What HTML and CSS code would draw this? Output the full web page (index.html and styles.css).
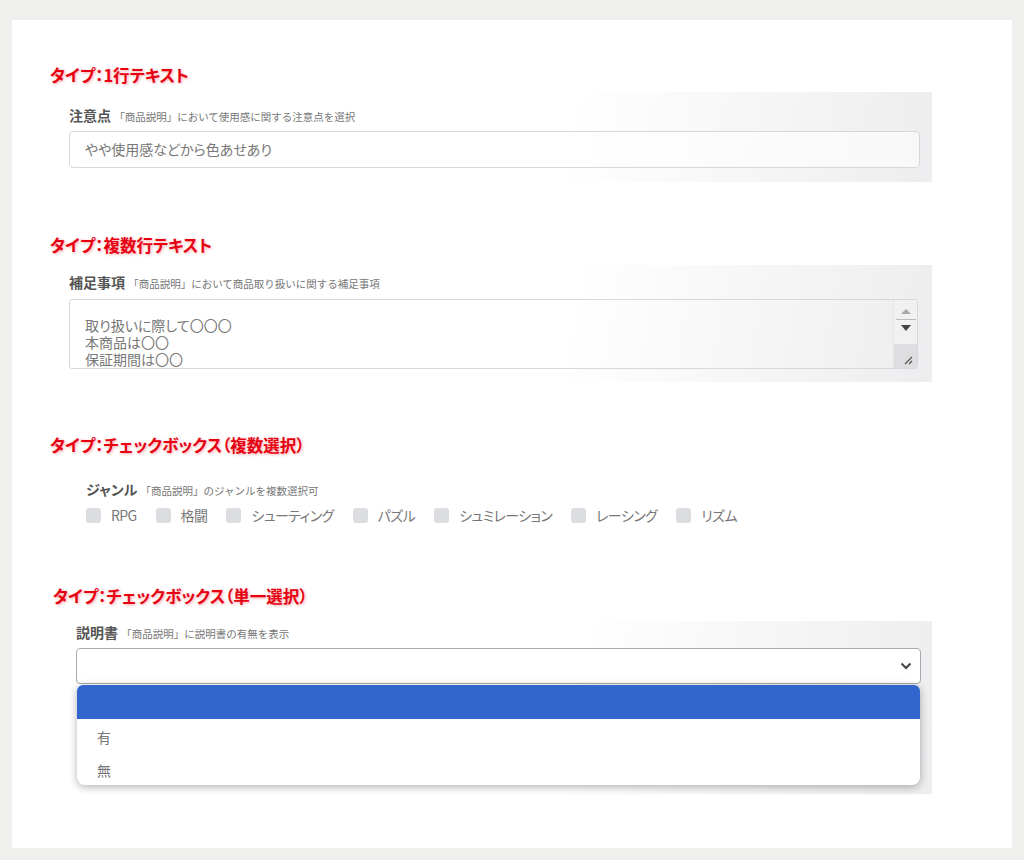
FILE: index.html
```html
<!DOCTYPE html>
<html lang="ja">
<head>
  <meta charset="UTF-8">
  <title>商品説明 入力タイプ</title>
  <link rel="stylesheet" href="styles.css">
</head>
<body>
  <div class="card">

    <!-- 1行テキスト -->
    <h2 class="type-title">タイプ：1行テキスト</h2>
    <div class="shot shot-single">
      <p class="field-label">注意点 <small>「商品説明」において使用感に関する注意点を選択</small></p>
      <div class="text-input">やや使用感などから色あせあり</div>
    </div>

    <!-- 複数行テキスト -->
    <h2 class="type-title t2">タイプ：複数行テキスト</h2>
    <div class="shot shot-multi">
      <p class="field-label">補足事項 <small>「商品説明」において商品取り扱いに関する補足事項</small></p>
      <div class="text-area">
        <div class="text-area-body">
          取り扱いに際して〇〇〇<br>
          本商品は〇〇<br>
          保証期間は〇〇
        </div>
        <div class="scrollbar">
          <span class="arrow up"></span>
          <span class="sep"></span>
          <span class="arrow down"></span>
          <span class="grip">
            <svg width="10" height="10" viewBox="0 0 10 10"><path d="M2 9 L9 2 M6 9 L9 6" stroke="#555" stroke-width="1.2" fill="none"/></svg>
          </span>
        </div>
      </div>
    </div>

    <!-- チェックボックス（複数選択） -->
    <h2 class="type-title t3">タイプ：チェックボックス（複数選択）</h2>
    <div class="shot shot-check">
      <p class="field-label">ジャンル <small>「商品説明」のジャンルを複数選択可</small></p>
      <div class="check-row">
        <label class="check"><span class="box"></span>RPG</label>
        <label class="check"><span class="box"></span>格闘</label>
        <label class="check"><span class="box"></span>シューティング</label>
        <label class="check"><span class="box"></span>パズル</label>
        <label class="check"><span class="box"></span>シュミレーション</label>
        <label class="check"><span class="box"></span>レーシング</label>
        <label class="check"><span class="box"></span>リズム</label>
      </div>
    </div>

    <!-- チェックボックス（単一選択） -->
    <h2 class="type-title t4">タイプ：チェックボックス（単一選択）</h2>
    <div class="shot shot-select">
      <p class="field-label">説明書 <small>「商品説明」に説明書の有無を表示</small></p>
      <div class="select-wrap">
        <div class="select">
          <svg class="chevron" width="12" height="8" viewBox="0 0 12 8"><path d="M1.5 1.5 L6 6 L10.5 1.5" stroke="#444" stroke-width="2" fill="none"/></svg>
        </div>
        <ul class="dropdown">
          <li class="active"></li>
          <li>有</li>
          <li>無</li>
        </ul>
      </div>
    </div>

  </div>
</body>
</html>
```

FILE: styles.css
```css
* {
  margin: 0;
  padding: 0;
  box-sizing: border-box;
}

body {
  background-color: #efefee;
  font-family: "Noto Sans CJK JP", "Noto Sans", sans-serif;
  font-feature-settings: "palt" 1;
}

.card {
  margin: 20px 12px 0;
  height: 828px;
  background-color: #fff;
  padding: 45px 0 0 38px;
}

/* Red section titles */
.type-title {
  font-size: 16.5px;
  line-height: 20px;
  font-weight: bold;
  color: #e60012;
  text-shadow: 1px 1px 3px rgba(220, 0, 0, 0.35);
}

.type-title.t2 { margin-top: 53px; }
.type-title.t3 { margin-top: 53px; }
.type-title.t4 { margin-top: 62px; margin-left: 3px; }

/* Screenshot panels */
.shot {
  width: 870px;
  margin-left: 12px;
  background: linear-gradient(100deg, #fff 58%, #ededef 100%);
}

.field-label {
  font-size: 14px;
  line-height: 18px;
  height: 18px;
  font-weight: bold;
  color: #555;
}

.field-label small {
  font-size: 10.5px;
  line-height: 1;
  font-weight: normal;
  color: #777;
  font-feature-settings: normal;
}

.shot-single {
  margin-top: 7px;
  padding: 14px 12px 14px 7px;
}

.text-input {
  margin-top: 7px;
  height: 37px;
  border: 1px solid #d8d8dc;
  border-radius: 4px;
  background: rgba(255, 255, 255, 0.6);
  padding-left: 15px;
  font-size: 14px;
  line-height: 35px;
  color: #777;
}

.shot-multi {
  margin-top: 10px;
  padding: 8px 14px 13px 7px;
}

.text-area {
  margin-top: 8px;
  height: 70px;
  border: 1px solid #d8d8dc;
  border-radius: 3px;
  display: flex;
  overflow: hidden;
}

.text-area-body {
  flex: 1;
  padding: 17px 0 0 15px;
  font-size: 14px;
  line-height: 17px;
  color: #777;
}

.scrollbar {
  width: 24px;
  display: flex;
  flex-direction: column;
  align-items: center;
  background-color: #f1f1f2;
  border-left: 1px solid #e6e6e8;
}

.arrow {
  width: 0;
  height: 0;
  border-left: 5px solid transparent;
  border-right: 5px solid transparent;
}

.arrow.up {
  margin-top: 9px;
  border-bottom: 5px solid #a8a8a8;
}

.arrow.down {
  margin-top: 5px;
  border-top: 6px solid #444;
}

.sep {
  margin-top: 5px;
  width: 20px;
  height: 1px;
  background: #bbb;
}

.grip {
  margin-top: auto;
  width: 100%;
  height: 24px;
  background-color: #dedee0;
  display: flex;
  align-items: flex-end;
  justify-content: flex-end;
  padding: 0 4px 3px 0;
}

/* Checkbox group */
.shot-check {
  background: none;
  margin-top: 25px;
  padding: 0 0 0 24px;
}

.check-row {
  display: flex;
  gap: 19px;
  margin-top: 8px;
}

.check {
  display: flex;
  align-items: center;
  gap: 10px;
  font-size: 14px;
  line-height: 18px;
  letter-spacing: -0.6px;
  color: #777;
}

.check .box {
  width: 15px;
  height: 15px;
  border-radius: 3px;
  background-color: #dcdde1;
}

/* Select with open dropdown */
.shot-select {
  width: 864px;
  margin-left: 18px;
  margin-top: 15px;
  height: 173px;
  padding: 2px 11px 0 8px;
}

.select-wrap {
  position: relative;
  margin-top: 7px;
}

.select {
  height: 36px;
  border: 1px solid #a9a9ad;
  border-radius: 4px;
  background-color: #fff;
  display: flex;
  align-items: center;
  justify-content: flex-end;
  padding-right: 8px;
}

.dropdown {
  position: absolute;
  top: 37px;
  left: 1px;
  right: 1px;
  list-style: none;
  background-color: #fff;
  border-radius: 6px 6px 8px 8px;
  box-shadow: 0 2px 8px rgba(0, 0, 0, 0.3);
  overflow: hidden;
}

.dropdown li {
  height: 33px;
  padding: 3px 0 0 20px;
  font-size: 14px;
  line-height: 30px;
  color: #777;
}

.dropdown li.active {
  height: 34px;
  padding: 0;
  background-color: #3366cc;
}
```
